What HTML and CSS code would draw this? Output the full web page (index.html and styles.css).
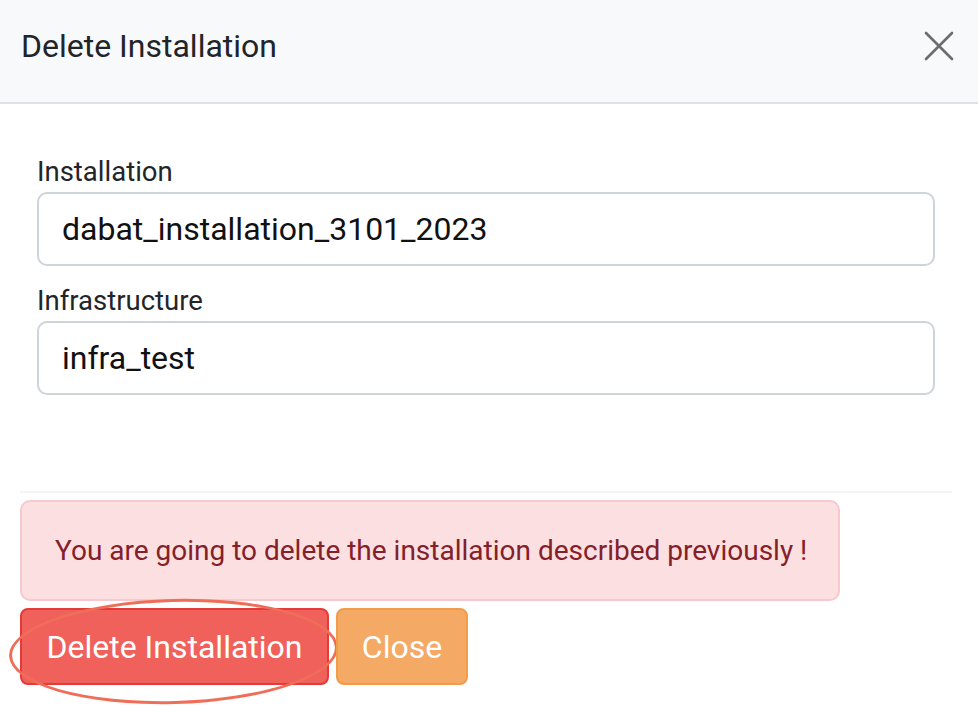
FILE: index.html
```html
<!DOCTYPE html>
<html>
<head>
<meta charset="utf-8">
<link rel="stylesheet" href="styles.css">
</head>
<body>
<div class="modal">
  <div class="modal-header">
    <h5 class="modal-title">Delete Installation</h5>
    <button class="btn-close" aria-label="Close">
      <svg width="30" height="30" viewBox="0 0 30 30"><path d="M2 2 L28 28 M28 2 L2 28" stroke="#6c6c6c" stroke-width="2.6" stroke-linecap="round" fill="none"/></svg>
    </button>
  </div>
  <div class="modal-body">
    <div class="field">
      <label class="form-label">Installation</label>
      <div class="form-control">dabat_installation_3101_2023</div>
    </div>
    <div class="field">
      <label class="form-label">Infrastructure</label>
      <div class="form-control">infra_test</div>
    </div>
  </div>
  <div class="modal-footer">
    <div class="alert">You are going to delete the installation described previously !</div>
    <div class="actions">
      <button class="btn btn-danger">Delete Installation<span class="annot"></span></button>
      <button class="btn btn-warning">Close</button>
    </div>
  </div>
</div>
</body>
</html>
```
FILE: styles.css
```css
* { box-sizing: border-box; }
html, body { margin: 0; padding: 0; background: #fff; }
body { font-family: Roboto, "Liberation Sans", sans-serif; color: #212529; }
.modal { width: 978px; height: 706px; overflow: hidden; }
.modal-header {
  height: 104px;
  background: #f8f9fa;
  border-bottom: 2px solid #dee2e6;
  display: flex;
  align-items: center;
  justify-content: space-between;
  padding: 0 24px 10px 21px;
}
.modal-title { margin: 0; font-size: 32px; font-weight: 400; color: #212529; }
.btn-close { background: none; border: 0; padding: 0; width: 30px; height: 30px; display: flex; }
.modal-body { padding: 52px 43px 0 37px; display: flex; flex-direction: column; gap: 19px; height: 387px; }
.field { display: flex; flex-direction: column; }
.form-label { font-size: 27.5px; line-height: 32px; margin-bottom: 4px; color: #212529; }
.form-control {
  height: 74px;
  border: 2px solid #ced4da;
  border-radius: 10px;
  padding: 0 23px;
  font-size: 32px;
  display: flex;
  align-items: center;
  color: #111;
}
.modal-footer { margin: 0 26px 0 20px; border-top: 2px solid #f4f4f4; padding-top: 7px; display: flex; flex-direction: column; align-items: flex-start; gap: 7px; }
.alert {
  width: 820px;
  height: 101px;
  background: #fbdfe1;
  border: 2px solid #f6c9cc;
  border-radius: 10px;
  color: #842029;
  font-size: 28px;
  white-space: nowrap;
  display: flex;
  align-items: center;
  padding: 0 10px 0 33px;
}
.actions { display: flex; gap: 7px; }
.btn {
  height: 77px;
  border-radius: 8px;
  font-family: Roboto, "Liberation Sans", sans-serif;
  font-size: 32px;
  color: #fff;
  padding: 0;
  border: 2px solid;
  position: relative;
}
.btn-danger { width: 309px; background: #f0615c; border-color: #e53a38; }
.btn-warning { width: 132px; background: #f4a964; border-color: #f29c4a; }
.annot {
  position: absolute;
  left: -13px;
  top: -11px;
  width: 329px;
  height: 105px;
  border: 3px solid #ef6e58;
  border-radius: 50%;
  transform: rotate(-1.5deg);
  pointer-events: none;
}
```
